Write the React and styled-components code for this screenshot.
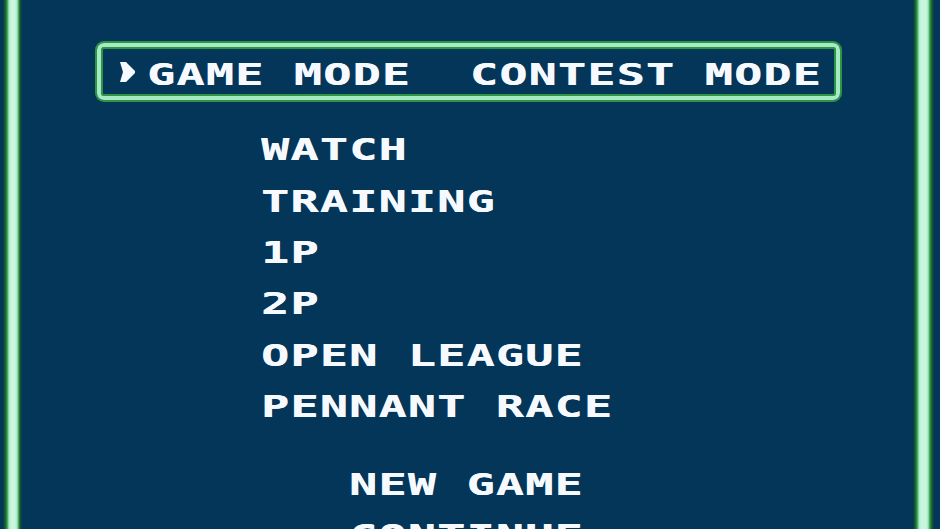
import React from "react";
import styled, { createGlobalStyle } from "styled-components";

const NAVY = "#043659";
const DARK = "#1b5a2d";
const MID = "#2f9443";
const LIGHT = "#a4eac2";
const PALE = "#c8f6de";
const INK = "#f6faff";

const GlobalStyle = createGlobalStyle`
  html, body {
    margin: 0;
    padding: 0;
    background: ${NAVY};
    overflow: hidden;
  }
`;

const Screen = styled.div`
  width: 940px;
  height: 529px;
  overflow: hidden;
  box-sizing: border-box;
  padding-top: 43px;
  background: linear-gradient(
    to right,
    ${NAVY} 3px,
    ${DARK} 5px,
    ${MID} 7px,
    ${LIGHT} 9px,
    ${PALE} 11px,
    ${PALE} 15px,
    ${LIGHT} 17px,
    ${MID} 19px,
    ${DARK} 20px,
    ${NAVY} 22px,
    ${NAVY} 913px,
    ${DARK} 915px,
    ${MID} 917px,
    ${LIGHT} 919px,
    ${PALE} 921px,
    ${PALE} 926px,
    ${LIGHT} 928px,
    ${MID} 930px,
    ${DARK} 932px,
    ${NAVY} 934px
  );
  font-family: "DejaVu Sans Mono", "Liberation Mono", monospace;
  font-weight: bold;
  color: ${INK};
`;

const ModeBox = styled.div`
  box-sizing: border-box;
  margin-left: 97px;
  width: 743px;
  height: 57px;
  border: 4px solid ${LIGHT};
  border-radius: 7px;
  box-shadow: 0 0 0 2px ${MID}, inset 0 0 0 2px ${MID};
  display: flex;
  align-items: center;
  padding-left: 19px;
`;

const ArrowSvg = styled.svg`
  width: 15px;
  height: 20px;
  flex: none;
  margin-right: 12px;
`;

const Label = styled.span`
  display: inline-block;
  font-size: 31px;
  line-height: 31px;
  letter-spacing: 0.9px;
  white-space: pre;
  transform: scaleX(1.5);
  transform-origin: left center;
  text-shadow: 0.4px 0 0 ${INK};
  margin-top: ${(p) => (p.$shift ? `${p.$shift}px` : "0")};
`;

const Menu = styled.div`
  margin-top: 24px;
  margin-left: 261px;
`;

const MenuItem = styled.div`
  height: 51.4px;
  line-height: 51.4px;
  display: flex;
  align-items: center;
`;

const SubMenu = styled.div`
  margin-top: 26px;
  margin-left: 88px;
`;

function Arrow() {
  return (
    <ArrowSvg viewBox="0 0 15 20">
      <polygon points="0,0 6,0 15,9 15,11 6,20 0,20 3,10" fill={INK} />
    </ArrowSvg>
  );
}

const items = ["WATCH", "TRAINING", "1P", "2P", "OPEN LEAGUE", "PENNANT RACE"];
const subItems = ["NEW GAME", "CONTINUE"];

export default function App() {
  return (
    <>
      <GlobalStyle />
      <Screen>
        <ModeBox>
          <Arrow />
          <Label $shift={5}>{"GAME MODE  CONTEST MODE"}</Label>
        </ModeBox>
        <Menu>
          {items.map((t) => (
            <MenuItem key={t}>
              <Label>{t}</Label>
            </MenuItem>
          ))}
          <SubMenu>
            {subItems.map((t) => (
              <MenuItem key={t}>
                <Label>{t}</Label>
              </MenuItem>
            ))}
          </SubMenu>
        </Menu>
      </Screen>
    </>
  );
}
